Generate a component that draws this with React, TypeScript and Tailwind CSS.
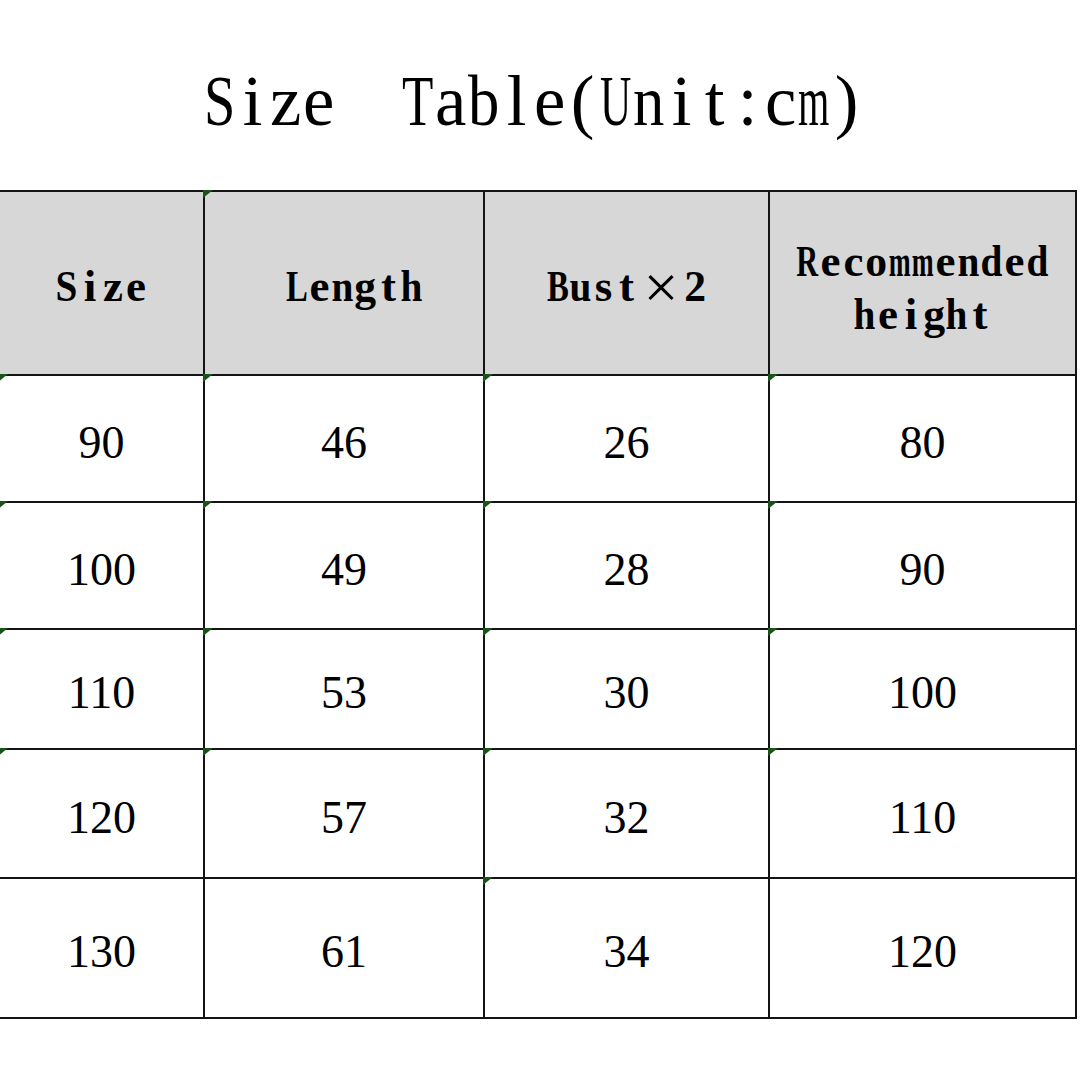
const SERIF = "font-['Liberation_Serif','Times_New_Roman',serif]";

// Times glyph widths (per 1000 em), used to squeeze wide letters into a mono cell
const REGULAR: Record<string, number> = {
  S: 556, i: 278, z: 444, e: 444, T: 611, a: 444, b: 500, l: 278,
  '(': 333, U: 722, n: 500, t: 278, ':': 278, c: 444, m: 778, ')': 333,
};
const BOLD: Record<string, number> = {
  S: 556, i: 278, z: 444, e: 444, L: 667, n: 556, g: 500, t: 333, h: 556,
  B: 667, u: 556, s: 389, '2': 500, R: 722, c: 444, o: 500, m: 833, d: 556,
};

function Mono({
  text,
  size,
  advance,
  cellClass,
  widths,
  fill = 0.9,
}: {
  text: string;
  size: number;
  advance: number;
  cellClass: string;
  widths: Record<string, number>;
  fill?: number;
}) {
  return (
    <span className="inline-flex">
      {text.split('').map((ch, i) => {
        const w = ((widths[ch] ?? 500) * size) / 1000;
        const scale = Math.min(1, (advance * fill) / w);
        return (
          <span key={i} className={`inline-flex justify-center ${cellClass}`}>
            <span className="inline-block" style={{ transform: `scaleX(${scale})` }}>
              {ch === ' ' ? '\u00a0' : ch}
            </span>
          </span>
        );
      })}
    </span>
  );
}

function Header({ text }: { text: string }) {
  return <Mono text={text} size={45} advance={23} cellClass="w-[23px]" widths={BOLD} fill={0.95} />;
}

function Marker() {
  return (
    <span className="absolute -left-[2px] -top-[2px] z-10 h-0 w-0 border-r-[10px] border-t-[8px] border-r-transparent border-t-[#1a521a]" />
  );
}

const widths = ['w-[205px]', 'w-[280px]', 'w-[285px]', 'w-[307px]'];

const rows = [
  { cells: ['90', '46', '26', '80'], marks: [1, 1, 1, 1], h: 'h-[127px]' },
  { cells: ['100', '49', '28', '90'], marks: [1, 1, 1, 1], h: 'h-[127px]' },
  { cells: ['110', '53', '30', '100'], marks: [1, 1, 1, 1], h: 'h-[120px]' },
  { cells: ['120', '57', '32', '110'], marks: [1, 1, 1, 1], h: 'h-[129px]' },
  { cells: ['130', '61', '34', '120'], marks: [0, 0, 1, 0], h: 'h-[140px]' },
];

const cellBase = 'relative flex items-center justify-center border-b-2 border-r-2 border-[#141414]';

export default function App() {
  return (
    <div className={`h-[1080px] w-[1080px] overflow-hidden bg-white text-black ${SERIF}`}>
      <div className="flex h-[190px] items-center justify-center pr-[14px] pt-[13px] text-[71px] leading-none">
        <Mono text="Size  Table(Unit:cm)" size={71} advance={33} cellClass="w-[33px]" widths={REGULAR} fill={0.95} />
      </div>

      <div className="w-[1077px] border-t-2 border-[#141414]">
        <div className="flex h-[184px] bg-[#d7d7d7] text-[45px] font-bold leading-none">
          <div className={`${cellBase} ${widths[0]} pt-[7px]`}>
            <Header text="Size" />
          </div>
          <div className={`${cellBase} ${widths[1]} pl-[20px] pt-[7px]`}>
            <Marker />
            <Header text="Length" />
          </div>
          <div className={`${cellBase} ${widths[2]} pt-[7px]`}>
            <span className="inline-flex items-center">
              <Header text="Bust" />
              <span className="inline-flex w-[46px] justify-center text-[62px] font-normal">×</span>
              <Header text="2" />
            </span>
          </div>
          <div className={`${cellBase} ${widths[3]} flex-col pt-[10px] leading-[53px]`}>
            <Header text="Recommended" />
            <Header text="height" />
          </div>
        </div>

        {rows.map((row, r) => (
          <div key={r} className={`flex ${row.h} text-[46px] leading-none`}>
            {row.cells.map((v, c) => (
              <div key={c} className={`${cellBase} ${widths[c]} pt-[8px]`}>
                {row.marks[c] ? <Marker /> : null}
                {v}
              </div>
            ))}
          </div>
        ))}
      </div>
    </div>
  );
}
